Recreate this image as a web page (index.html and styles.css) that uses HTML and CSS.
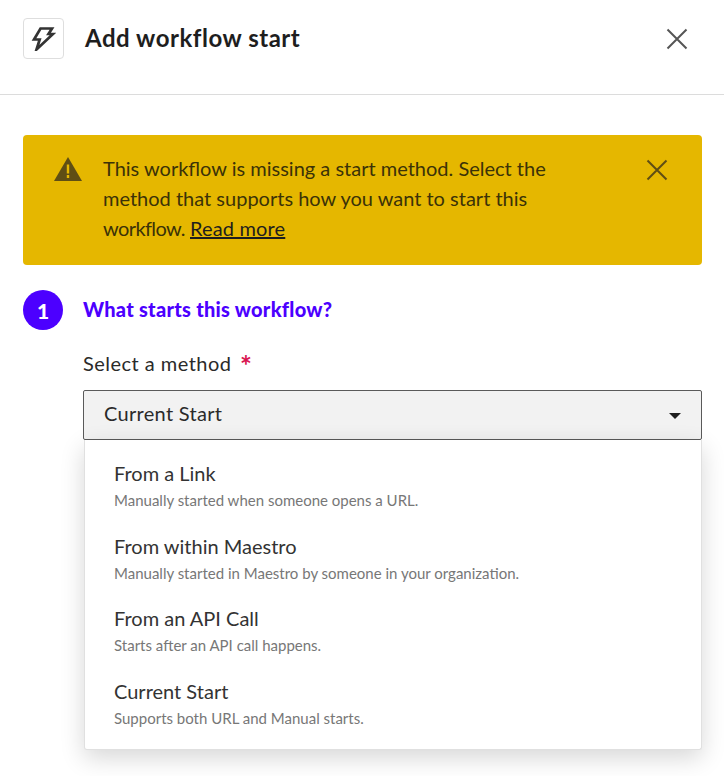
FILE: index.html
```html
<!DOCTYPE html>
<html lang="en">
<head>
<meta charset="utf-8">
<title>Add workflow start</title>
<link rel="stylesheet" href="styles.css">
</head>
<body>
<header class="header">
  <div class="header-left">
    <span class="icon-box">
      <svg width="25" height="25" viewBox="0 0 25 25" fill="none" stroke="#333" stroke-width="2.7" stroke-linejoin="miter"><path d="M9.5 2.5H21L17.5 8H22L5.5 23.5 8.7 13.5H3z"/></svg>
    </span>
    <h1 class="title">Add workflow start</h1>
  </div>
  <button class="close" aria-label="Close">
    <svg width="22" height="22" viewBox="0 0 22 22" stroke="#555" stroke-width="2" fill="none"><path d="M1.5 1.5l19 19M20.5 1.5l-19 19"/></svg>
  </button>
</header>
<main class="content">
  <section class="banner">
    <svg class="warn" width="30" height="26" viewBox="0 0 30 26"><path fill="#5f4e14" d="M15 1L29 25H1z"/><rect x="13.8" y="8.5" width="2.4" height="9" fill="#e5b700"/><rect x="13.8" y="19" width="2.4" height="3" fill="#e5b700"/></svg>
    <p class="banner-text">This workflow is missing a start method. Select the method that supports how you want to start this <span class="tight">workflow.</span> <a class="link" href="#">Read more</a></p>
    <svg class="banner-close" width="22" height="22" viewBox="0 0 22 22" stroke="#5f4e14" stroke-width="2" fill="none"><path d="M1.5 1.5l19 19M20.5 1.5l-19 19"/></svg>
  </section>
  <div class="step">
    <span class="step-num">1</span>
    <h2 class="step-title">What starts this workflow?</h2>
  </div>
  <div class="field">
    <label class="label">Select a method <span class="req">*</span></label>
    <div class="select">
      <span>Current Start</span>
      <span class="caret"></span>
    </div>
    <ul class="menu">
      <li class="item"><span class="item-title">From a Link</span><span class="item-desc">Manually started when someone opens a URL.</span></li>
      <li class="item"><span class="item-title">From within Maestro</span><span class="item-desc">Manually started in Maestro by someone in your organization.</span></li>
      <li class="item"><span class="item-title">From an API Call</span><span class="item-desc">Starts after an API call happens.</span></li>
      <li class="item"><span class="item-title">Current Start</span><span class="item-desc">Supports both URL and Manual starts.</span></li>
    </ul>
  </div>
</main>
</body>
</html>
```
FILE: styles.css
```css
* { box-sizing: border-box; }
html, body { margin: 0; height: 776px; overflow: hidden; background: #fff; }
body { font-family: "Lato", "Liberation Sans", sans-serif; color: #1e1e1e; }
.header { height: 95px; border-bottom: 1px solid #dcdcdc; padding: 18px 36px 0 23px; display: flex; justify-content: space-between; align-items: flex-start; }
.header-left { display: flex; align-items: center; gap: 21px; }
.icon-box { width: 41px; height: 41px; border: 1px solid #dedede; border-radius: 4px; display: flex; align-items: center; justify-content: center; }
.title { margin: -2px 0 0; font-size: 24px; font-weight: 700; line-height: 41px; letter-spacing: .52px; }
.close { margin-top: 10px; padding: 0; border: 0; background: none; display: flex; }
.content { padding: 40px 22px 0 23px; }
.banner { height: 130px; background: #e5b700; border-radius: 4px; padding: 18px 35px 0 30px; display: flex; align-items: flex-start; color: #3b3208; }
.warn { margin-top: 3px; flex: none; }
.banner-text { margin: 0 0 0 20px; width: 480px; font-size: 20px; line-height: 30px; }
.tight { letter-spacing: -.6px; }
.link { color: #1e1e1e; text-decoration: underline; letter-spacing: .15px; }
.banner-close { margin: 6px -1px 0 auto; flex: none; }
.step { display: flex; align-items: center; gap: 21px; margin-top: 25px; height: 40px; }
.step-num { width: 40px; height: 40px; border-radius: 50%; background: #4c00ff; color: #fff; font-weight: 900; font-size: 21px; display: flex; align-items: center; justify-content: center; }
.step-title { margin: -2px 0 0 -1px; font-size: 20px; font-weight: 900; color: #4c00ff; letter-spacing: .26px; }
.field { position: relative; margin: 19px 0 0 60px; }
.label { display: block; font-size: 20px; line-height: 28px; color: #2a2a2a; letter-spacing: .47px; }
.req { color: #d9134f; margin-left: 3px; font-size: 28px; font-weight: 700; line-height: 20px; letter-spacing: 0; vertical-align: -5px; }
.select { margin-top: 13px; height: 50px; background: #f2f2f2; border: 1px solid #5a5a5a; border-radius: 2px; padding: 0 20px 5px; display: flex; align-items: center; justify-content: space-between; font-size: 20px; color: #2a2a2a; letter-spacing: .3px; }
.caret { width: 0; height: 0; margin-top: 7px; border-left: 6.5px solid transparent; border-right: 6.5px solid transparent; border-top: 6px solid #1e1e1e; }
.menu { position: absolute; left: 1px; right: 0; top: 91px; margin: 0; padding: 15px 0 0; height: 310px; list-style: none; background: #fff; border: 1px solid #e0e0e0; border-top: 0; border-radius: 0 0 3px 3px; box-shadow: 0 8px 24px rgba(0,0,0,.16); }
.item { display: flex; flex-direction: column; height: 72.7px; padding-left: 29px; }
.item-title { font-size: 20px; line-height: 36px; color: #333; }
.item-desc { font-size: 15px; line-height: 19px; color: #777; }
```
